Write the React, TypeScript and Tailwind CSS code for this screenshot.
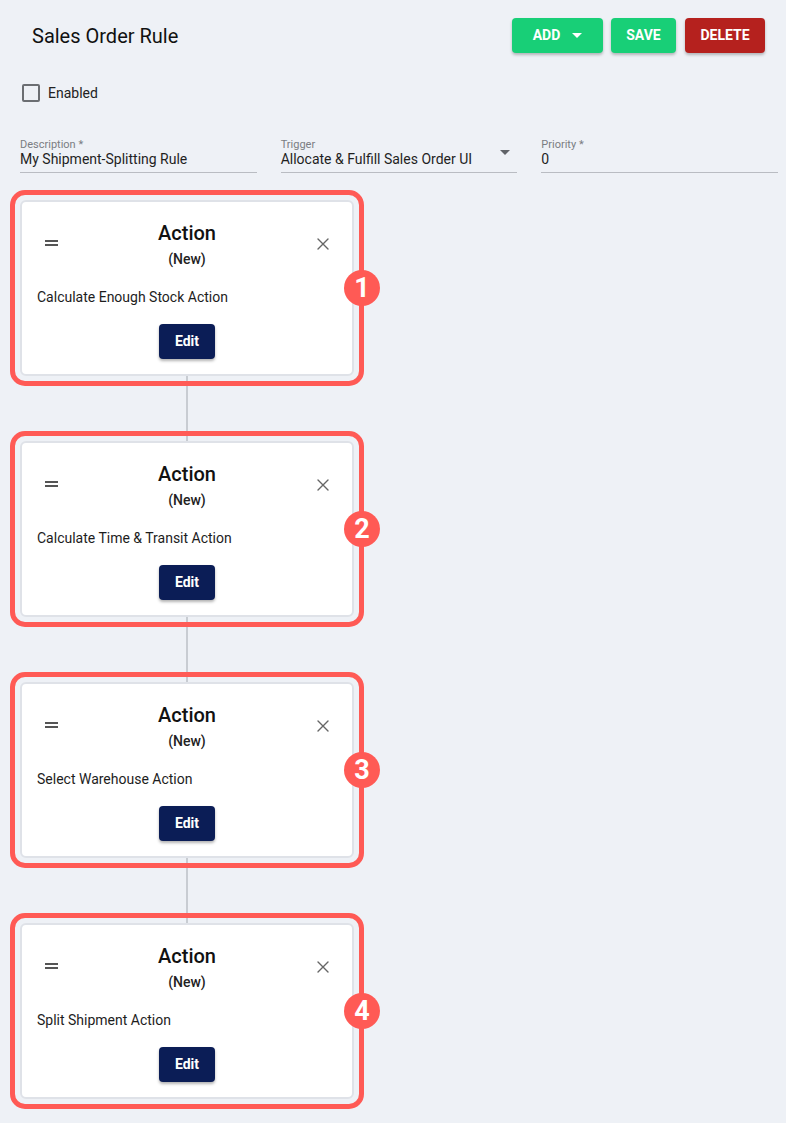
const ACTIONS = [
  'Calculate Enough Stock Action',
  'Calculate Time & Transit Action',
  'Select Warehouse Action',
  'Split Shipment Action',
]

function Field({ label, value, select }: { label: string; value: string; select?: boolean }) {
  return (
    <div className="relative flex flex-col border-b border-[#b9bcc2] pb-[5px]">
      <span className="text-[11px] leading-[12px] text-[#7a7d82]">{label}</span>
      <span className="text-[14px] leading-[16px] text-[#1f1f1f]">{value}</span>
      {select && (
        <span className="absolute right-[7px] top-[11px] h-0 w-0 border-x-[5px] border-t-[5px] border-x-transparent border-t-[#606368]" />
      )}
    </div>
  )
}

function ActionCard({ index, text }: { index: number; text: string }) {
  return (
    <div className="relative w-[334px]">
      <div className="flex h-[176px] flex-col rounded-[6px] border-2 border-[#dfe2e8] bg-white px-[15px] pt-[17px]">
        <div className="relative flex flex-col items-center">
          <span className="text-[20px] font-medium leading-[28px] text-[#111]">Action</span>
          <span className="mt-[2px] text-[14px] font-medium leading-[20px] text-[#222]">(New)</span>
          <div className="absolute left-[8px] top-[21px] flex flex-col gap-[2px]">
            <span className="h-[2px] w-[13px] bg-[#555]" />
            <span className="h-[2px] w-[13px] bg-[#555]" />
          </div>
          <svg className="absolute right-[7px] top-[18px]" width="14" height="14" viewBox="0 0 14 14">
            <path d="M2 2 L12 12 M12 2 L2 12" stroke="#666" strokeWidth="1.4" strokeLinecap="round" />
          </svg>
        </div>
        <p className="mt-[18px] text-[14px] leading-[20px] text-[#1d1d1d]">{text}</p>
        <div className="mt-[17px] flex justify-center">
          <button className="h-[35px] w-[56px] rounded-[4px] bg-[#0b1d56] text-[14px] font-bold text-white shadow-[0_2px_3px_rgba(0,0,0,0.3)]">
            Edit
          </button>
        </div>
      </div>
      {/* annotation overlay */}
      <div className="pointer-events-none absolute -inset-[10px] rounded-[15px] border-[5px] border-[#ff5a55]" />
      <div className="absolute right-[-26px] top-[70px] flex h-[36px] w-[36px] items-center justify-center rounded-full bg-[#ff5a55] text-[27px] font-bold leading-none text-white">
        {index}
      </div>
    </div>
  )
}

export default function App() {
  return (
    <div className="min-h-screen bg-[#eef1f6] font-['Roboto',sans-serif]">
      <div className="flex items-center justify-between pl-[32px] pr-[21px] pt-[18px]">
        <h1 className="text-[20px] leading-[26px] text-[#111]">Sales Order Rule</h1>
        <div className="flex gap-[8px]">
          <button className="flex h-[35px] w-[91px] items-center justify-center gap-[12px] rounded-[4px] bg-[#18cf77] text-[14px] font-bold text-white shadow-[0_2px_3px_rgba(0,0,0,0.25)]">
            ADD
            <span className="h-0 w-0 border-x-[5px] border-t-[5px] border-x-transparent border-t-white" />
          </button>
          <button className="h-[35px] w-[65px] rounded-[4px] bg-[#18cf77] text-[14px] font-bold text-white shadow-[0_2px_3px_rgba(0,0,0,0.25)]">
            SAVE
          </button>
          <button className="ml-[1px] h-[35px] w-[80px] rounded-[4px] bg-[#b5211e] text-[14px] font-bold text-white shadow-[0_2px_3px_rgba(0,0,0,0.25)]">
            DELETE
          </button>
        </div>
      </div>

      <label className="mt-[30px] flex items-center gap-[8px] pl-[22px]">
        <span className="h-[18px] w-[18px] rounded-[2px] border-2 border-[#6b6e72]" />
        <span className="text-[14px] leading-[20px] text-[#222]">Enabled</span>
      </label>

      <div className="mt-[36px] grid grid-cols-3 gap-[24px] pl-[20px] pr-[8px]">
        <Field label="Description *" value="My Shipment-Splitting Rule" />
        <Field label="Trigger" value="Allocate & Fulfill Sales Order UI" select />
        <Field label="Priority *" value="0" />
      </div>

      <div className="flex flex-col items-start pl-[20px] pt-[27px]">
        {ACTIONS.map((text, i) => (
          <div key={text} className="flex flex-col items-center">
            {i > 0 && <div className="h-[65px] w-[2px] bg-[#c8ccd2]" />}
            <ActionCard index={i + 1} text={text} />
          </div>
        ))}
      </div>
    </div>
  )
}
